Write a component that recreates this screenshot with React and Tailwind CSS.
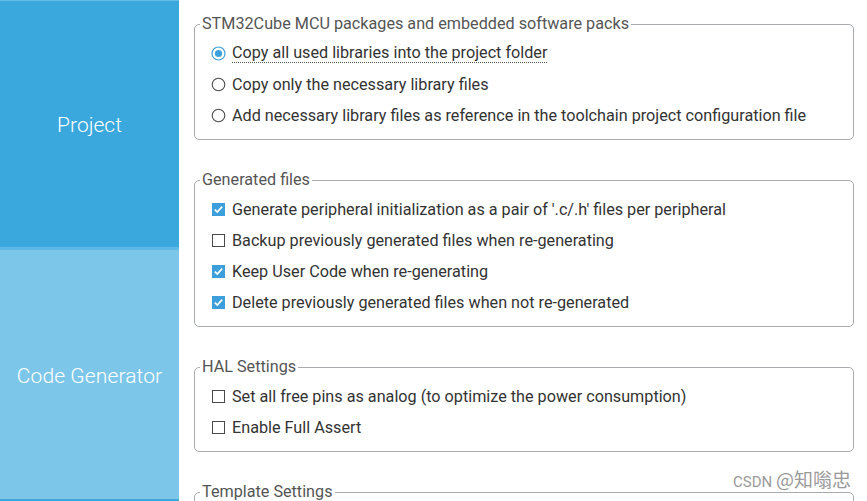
import React from "react";

const font = { fontFamily: "Roboto, 'Noto Sans', Arial, sans-serif" };

function Radio({ checked }) {
  return (
    <svg width="15" height="15" viewBox="0 0 15 15" className="shrink-0">
      {checked ? (
        <>
          <circle cx="7.5" cy="7.5" r="6.5" fill="#fff" stroke="#3b9fdc" strokeWidth="1.2" />
          <circle cx="7.5" cy="7.5" r="3.6" fill="#3b9fdc" />
        </>
      ) : (
        <circle cx="7.5" cy="7.5" r="6.3" fill="#fff" stroke="#4a4a4a" strokeWidth="1.1" />
      )}
    </svg>
  );
}

function Check({ checked }) {
  return (
    <svg width="15" height="15" viewBox="0 0 15 15" className="shrink-0">
      {checked ? (
        <>
          <rect x="1" y="1" width="13" height="13" fill="#3c9fdb" />
          <path d="M3.8 7.6 L6.3 10.1 L11.2 4.6" fill="none" stroke="#fff" strokeWidth="1.7" />
        </>
      ) : (
        <rect x="1.5" y="1.5" width="12" height="12" fill="#fff" stroke="#4a4a4a" strokeWidth="1" />
      )}
    </svg>
  );
}

function Row({ icon, children, focus }) {
  return (
    <div className="h-[31px] flex items-center gap-[6px]">
      {icon}
      <span
        className={
          "text-[16.2px] text-[#333333] leading-[18px] whitespace-nowrap " +
          (focus ? "border-b border-dotted border-[#555]" : "")
        }
      >
        {children}
      </span>
    </div>
  );
}

function Group({ title, children, className }) {
  return (
    <fieldset
      className={
        "border border-[#a9acaf] rounded-[5px] pl-[16px] pr-4 pt-[5px] pb-[8px] " + (className || "")
      }
    >
      <legend className="-ml-[11px] px-[2px] text-[16.2px] leading-[18px] text-[#555555] whitespace-nowrap">
        {title}
      </legend>
      {children}
    </fieldset>
  );
}

export default function App() {
  return (
    <div className="relative w-[867px] h-[501px] overflow-hidden bg-white flex" style={font}>
      <div className="w-[179px] shrink-0 flex flex-col">
        <div className="h-[247px] bg-[#3aa8dc] border-t border-[#66bce6] flex items-center justify-center">
          <span className="text-white text-[21px] font-light mt-[4px]">Project</span>
        </div>
        <div className="h-[3px] bg-[#5db9e5]" />
        <div className="flex-1 bg-[#7cc6ea] border-b-[2px] border-[#3aa8dc] flex items-center justify-center">
          <span className="text-white text-[21px] font-light mt-[4px] tracking-[0.1px]">Code Generator</span>
        </div>
      </div>
      <div className="flex-1 pl-[15px] pr-[13px] pt-[15px] flex flex-col">
        <Group title="STM32Cube MCU packages and embedded software packs">
          <Row icon={<Radio checked />} focus>
            Copy all used libraries into the project folder
          </Row>
          <Row icon={<Radio />}>Copy only the necessary library files</Row>
          <Row icon={<Radio />}>
            Add necessary library files as reference in the toolchain project configuration file
          </Row>
        </Group>
        <Group title="Generated files" className="mt-[31px]">
          <Row icon={<Check checked />}>
            Generate peripheral initialization as a pair of '.c/.h' files per peripheral
          </Row>
          <Row icon={<Check />}>Backup previously generated files when re-generating</Row>
          <Row icon={<Check checked />}>Keep User Code when re-generating</Row>
          <Row icon={<Check checked />}>Delete previously generated files when not re-generated</Row>
        </Group>
        <Group title="HAL Settings" className="mt-[31px]">
          <Row icon={<Check />}>Set all free pins as analog (to optimize the power consumption)</Row>
          <Row icon={<Check />}>Enable Full Assert</Row>
        </Group>
        <Group title="Template Settings" className="mt-[31px] h-[60px] shrink-0">
          <div />
        </Group>
      </div>
      <div
        className="absolute right-[16px] bottom-[7px] leading-[24px] text-[#9a9a9a] whitespace-nowrap"
        style={{ textShadow: "0 0 2px #fff" }}
      >
        <span className="text-[15px]" style={{ fontFamily: "Roboto, sans-serif" }}>
          CSDN{" "}
        </span>
        <span className="text-[19px]" style={{ fontFamily: "'Noto Sans CJK SC', sans-serif" }}>
          @知嗡忠
        </span>
      </div>
    </div>
  );
}
